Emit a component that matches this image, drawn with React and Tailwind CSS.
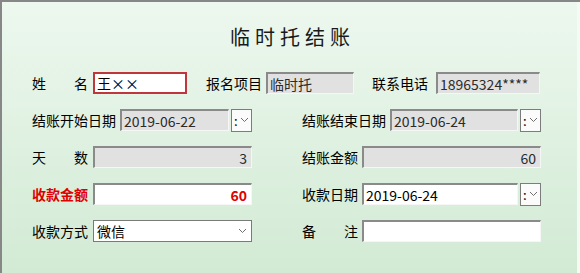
import React from 'react';

const font = { fontFamily: '"Noto Sans CJK SC", "Liberation Sans", sans-serif' };

const sunken = 'border-t-2 border-l-2 border-b border-r border-t-[#8a8a8a] border-l-[#8a8a8a] border-b-[#f6f6f6] border-r-[#f6f6f6]';

const Field = ({ width, value = '', gray, align = 'left', className = '' }) => (
  <div
    className={`${sunken} ${gray ? 'bg-[#e1e1e1] text-[#2b2b2b]' : 'bg-white text-black'} h-[22px] flex items-center px-[2px] text-[14px] leading-none ${
      align === 'right' ? 'justify-end pr-[4px]' : ''
    } ${className}`}
    style={{ width }}
  >
    {value}
  </div>
);

const Chevron = ({ className = '' }) => (
  <svg width="9" height="6" viewBox="0 0 9 6" className={className}>
    <path d="M1 1 L4.5 4.5 L8 1" fill="none" stroke="#6e6e6e" strokeWidth="1" />
  </svg>
);

const PickerButton = () => (
  <div className="ml-[2px] w-[21px] h-[23px] border border-[#7c7c7c] bg-[#fbfbfb] flex items-center pl-[2px] gap-[2px]">
    <span className="text-[13px] leading-none text-black">:</span>
    <Chevron />
  </div>
);

const SpacedLabel = ({ a, b, width = 56 }) => (
  <div className="flex justify-between text-[14px] text-black leading-none" style={{ width }}>
    <span>{a}</span>
    <span>{b}</span>
  </div>
);

const Label = ({ children, className = '' }) => (
  <span className={`text-[14px] text-black leading-none whitespace-nowrap ${className}`}>{children}</span>
);

export default function App() {
  return (
    <div
      className="w-[580px] h-[273px] overflow-hidden bg-gradient-to-b from-[#edf8ef] to-[#d2ead4] border-l-2 border-t-2 border-[#878787] relative"
      style={font}
    >
      <div className="absolute right-0 top-0 bottom-0 w-[3px] bg-[#f4faf4]" />
      <div className="pt-[22px] h-[70px] flex justify-center">
        <h1 className="text-[20px] tracking-[5px] text-[#1a1a1a] leading-[26px] pl-[5px] ml-[-2px]">临时托结账</h1>
      </div>

      <div className="pl-[30px] flex flex-col gap-[15px]">
        <div className="flex items-center h-[22px]">
          <SpacedLabel a="姓" b="名" />
          <div className="ml-[5px] w-[94px] h-[22px] border-2 border-[#c0363d] bg-white flex items-center px-[2px] text-[14px] leading-none">
            王××
          </div>
          <Label className="ml-[19px]">报名项目</Label>
          <Field width={88} value="临时托" gray className="ml-[4px]" />
          <Label className="ml-[18px]">联系电话</Label>
          <Field width={104} value="18965324****" gray className="ml-[8px] text-[13px]" />
        </div>

        <div className="flex items-center h-[22px]">
          <Label>结账开始日期</Label>
          <Field width={109} value="2019-06-22" gray className="ml-[4px]" />
          <PickerButton />
          <Label className="ml-[50px]">结账结束日期</Label>
          <Field width={128} value="2019-06-24" gray className="ml-[4px]" />
          <PickerButton />
        </div>

        <div className="flex items-center h-[22px]">
          <SpacedLabel a="天" b="数" />
          <Field width={159} value="3" gray align="right" className="ml-[5px]" />
          <Label className="ml-[50px]">结账金额</Label>
          <Field width={179} value="60" gray align="right" className="ml-[4px]" />
        </div>

        <div className="flex items-center h-[22px]">
          <span className="text-[14px] font-bold text-[#e00000] leading-none w-[61px] whitespace-nowrap">收款金额</span>
          <Field
            width={159}
            value={<span className="font-bold text-[#e00000]">60</span>}
            align="right"
          />
          <Label className="ml-[50px]">收款日期</Label>
          <Field width={156} value="2019-06-24" className="ml-[4px]" />
          <PickerButton />
        </div>

        <div className="flex items-center h-[22px]">
          <Label className="w-[61px]">收款方式</Label>
          <div className="w-[159px] h-[22px] border border-[#7a7a7a] bg-white flex items-center justify-between px-[3px] text-[14px] leading-none">
            <span>微信</span>
            <Chevron className="mr-[1px]" />
          </div>
          <div className="ml-[50px] flex items-center">
            <SpacedLabel a="备" b="注" width={56} />
          </div>
          <Field width={179} className="ml-[4px]" />
        </div>
      </div>
    </div>
  );
}
